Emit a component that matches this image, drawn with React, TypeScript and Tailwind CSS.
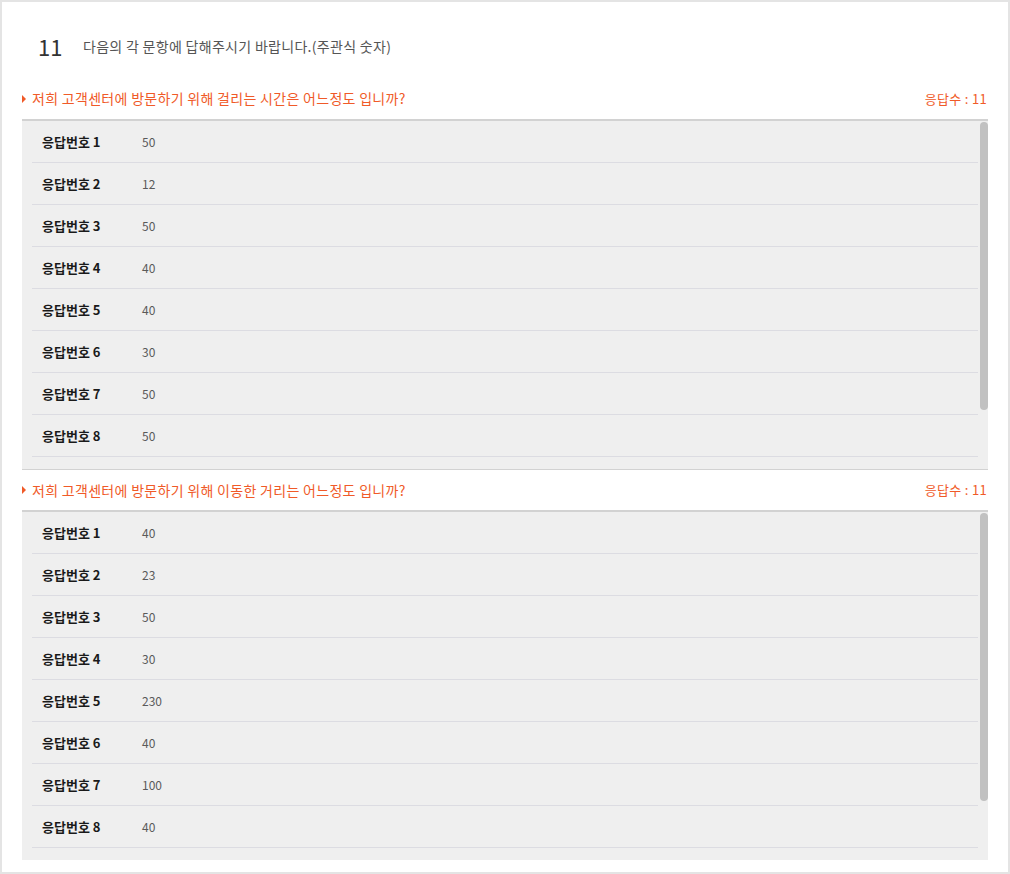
const sections = [
  {
    title: '저희 고객센터에 방문하기 위해 걸리는 시간은 어느정도 입니까?',
    count: 11,
    values: ['50', '12', '50', '40', '40', '30', '50', '50'],
    bottomBorder: true,
  },
  {
    title: '저희 고객센터에 방문하기 위해 이동한 거리는 어느정도 입니까?',
    count: 11,
    values: ['40', '23', '50', '30', '230', '40', '100', '40'],
    bottomBorder: false,
  },
];

const font = { fontFamily: '"Noto Sans CJK KR", "Noto Sans", sans-serif' };

const Section = ({ title, count, values, bottomBorder, first }: {
  title: string;
  count: number;
  values: string[];
  bottomBorder: boolean;
  first: boolean;
}) => (
  <div>
    <div className={`flex items-center justify-between ${first ? 'h-[41px]' : 'h-[40px]'}`}>
      <div className="flex items-center">
        <span className="w-0 h-0 border-y-[4px] border-y-transparent border-l-[4px] border-l-[#f05a28] mr-[6px]" />
        <span className="text-[14px] tracking-[0.3px] text-[#f05a28]">{title}</span>
      </div>
      <span className="text-[13px] tracking-[0.3px] text-[#f05a28] pr-px">응답수 : {count}</span>
    </div>
    <div
      className={`flex bg-[#efefef] border-t-2 border-[#d2d2d2] overflow-hidden ${bottomBorder ? 'h-[351px] border-b' : 'h-[350px]'}`}
    >
      <div className="flex-1">
        {values.map((v, i) => (
          <div key={i} className="ml-[10px] mr-[2px] h-[42px] flex items-center border-b border-[#dcdce2] pl-[10px]">
            <span className="w-[100px] text-[13px] font-bold text-[#1a1a1a]">응답번호 {i + 1}</span>
            <span className="text-[12px] text-[#5a5a5a]">{v}</span>
          </div>
        ))}
      </div>
      <div className="w-2 shrink-0">
        <div className="mt-px h-[288px] rounded-full bg-[#c1c1c1]" />
      </div>
    </div>
  </div>
);

export default function App() {
  return (
    <div style={font} className="w-[1010px] h-[874px] border-2 border-[#e4e4e4] bg-white px-[20px]">
      <div className="flex items-center h-[22px] mt-[33px] mb-[21px] pl-[16px]">
        <span className="text-[22px] leading-[22px] text-[#333] w-[45px]">11</span>
        <span className="text-[14px] tracking-[0.3px] text-[#555]">다음의 각 문항에 답해주시기 바랍니다.(주관식 숫자)</span>
      </div>
      {sections.map((s, i) => (
        <Section key={i} {...s} first={i === 0} />
      ))}
    </div>
  );
}
